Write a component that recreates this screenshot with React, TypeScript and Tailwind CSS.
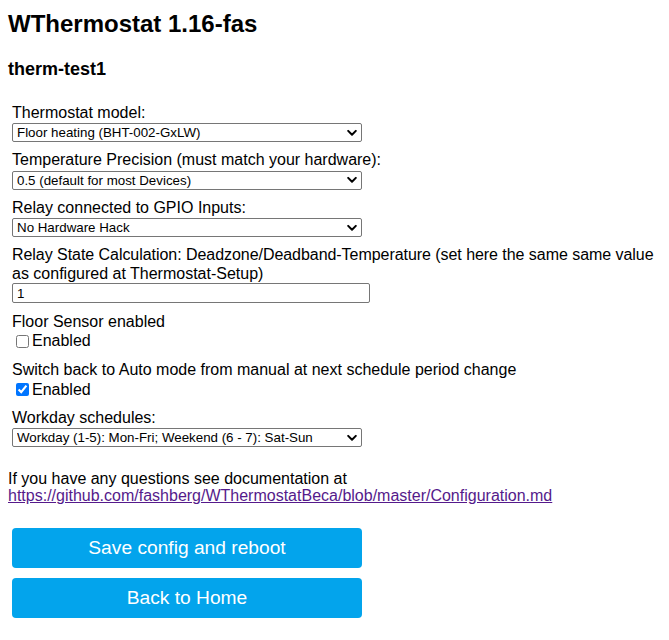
import React from "react";

function Chevron() {
  return (
    <svg
      className="pointer-events-none absolute right-[5px] top-1/2 -translate-y-1/2"
      width="10"
      height="7"
      viewBox="0 0 10 7"
      fill="none"
    >
      <path d="M1.2 1.4 L5 5.2 L8.8 1.4" stroke="#000" strokeWidth="2" strokeLinecap="round" strokeLinejoin="round" />
    </svg>
  );
}

function Select({ value }: { value: string }) {
  return (
    <div className="relative mt-[1px] h-[19px] w-[350px]">
      <select
        defaultValue={value}
        className="h-[19px] w-[350px] appearance-none rounded-[2px] border border-[#767676] bg-white pl-[4px] pr-[20px] text-[13.33px] leading-[17px] text-black outline-none"
      >
        <option value={value}>{value}</option>
      </select>
      <Chevron />
    </div>
  );
}

export default function App() {
  return (
    <div className="min-h-[640px] bg-white px-2 pt-[10px] font-['Liberation_Sans',Arial,sans-serif] text-black">
      <h2 className="text-[24px] font-bold leading-[28px]">WThermostat 1.16-fas</h2>
      <h3 className="mt-[21px] text-[18px] font-bold leading-[21px]">therm-test1</h3>

      <form className="mt-[24px] flex flex-col px-1 text-[16px] leading-[18.4px]">
        <div className="mb-[9px] flex flex-col">
          <label>Thermostat model:</label>
          <Select value="Floor heating (BHT-002-GxLW)" />
        </div>
        <div className="mb-[9px] flex flex-col">
          <label>Temperature Precision (must match your hardware):</label>
          <Select value="0.5 (default for most Devices)" />
        </div>
        <div className="mb-[9px] flex flex-col">
          <label>Relay connected to GPIO Inputs:</label>
          <Select value="No Hardware Hack" />
        </div>
        <div className="mb-[10px] flex flex-col">
          <label className="-mr-[12px]">
            <span className="whitespace-nowrap tracking-[-0.05px]">
              Relay State Calculation: Deadzone/Deadband-Temperature (set here the same same value
            </span>
            <br />
            as configured at Thermostat-Setup)
          </label>
          <input
            type="text"
            defaultValue="1"
            className="h-[20px] w-[358px] rounded-[2px] border border-[#767676] bg-white px-[4px] text-[13.33px] leading-[16px] outline-none"
          />
        </div>
        <div className="mb-[10px] flex flex-col">
          <label>Floor Sensor enabled</label>
          <label className="flex h-[20px] items-center">
            <input type="checkbox" className="my-[3px] ml-[4px] mr-[3px] h-[13px] w-[13px]" />
            <span>Enabled</span>
          </label>
        </div>
        <div className="mb-[9px] flex flex-col">
          <label>Switch back to Auto mode from manual at next schedule period change</label>
          <label className="flex h-[20px] items-center">
            <input type="checkbox" defaultChecked className="my-[3px] ml-[4px] mr-[3px] h-[13px] w-[13px]" />
            <span>Enabled</span>
          </label>
        </div>
        <div className="flex flex-col">
          <label>Workday schedules:</label>
          <Select value="Workday (1-5): Mon-Fri; Weekend (6 - 7): Sat-Sun" />
        </div>
      </form>

      <p className="mt-[23px] text-[16px] leading-[17px]">
        If you have any questions see documentation at
        <br />
        <a href="#" className="text-[#551a8b] underline">
          https://github.com/fashberg/WThermostatBeca/blob/master/Configuration.md
        </a>
      </p>

      <div className="mt-[24px] flex flex-col gap-[10px] px-1">
        <button className="h-[40px] w-[350px] rounded-[4px] bg-[#03a4ec] text-[19.2px] text-white">
          Save config and reboot
        </button>
        <button className="h-[40px] w-[350px] rounded-[4px] bg-[#03a4ec] text-[19.2px] text-white">
          Back to Home
        </button>
      </div>
    </div>
  );
}
